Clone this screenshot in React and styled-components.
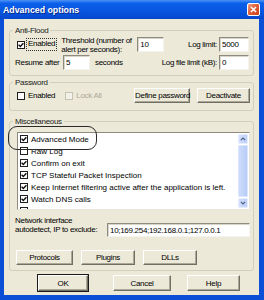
import React from 'react';
import styled, { createGlobalStyle, css } from 'styled-components';

const GlobalStyle = createGlobalStyle`
  html, body {
    margin: 0;
    padding: 0;
    background: #fff;
  }
  body {
    font-family: 'Liberation Sans', Arial, sans-serif;
    font-size: 8px;
    letter-spacing: -0.3px;
    color: #000;
  }
`;

const Window = styled.div`
  width: 264px;
  height: 300px;
  box-sizing: border-box;
  display: flex;
  flex-direction: column;
  background: #0b4fd6;
  padding: 0 5px 5px 4px;
  overflow: hidden;
`;

const TitleBar = styled.div`
  height: 19px;
  margin: 0 -5px 0 -4px;
  padding: 0 4px 0 3px;
  display: flex;
  align-items: center;
  justify-content: space-between;
  background: linear-gradient(#4b93f5 0%, #0a5fea 18%, #0855e0 60%, #0448cc 100%);
  color: #fff;
  font-weight: bold;
  font-size: 8.8px;
  letter-spacing: 0;
  text-shadow: 1px 1px 0 #0a2a8a;
`;

const CloseButton = styled.div`
  width: 13px;
  height: 13px;
  box-sizing: border-box;
  border: 1px solid #fff;
  border-radius: 2px;
  background: linear-gradient(135deg, #eda184 0%, #e0603a 45%, #c8401b 100%);
  display: flex;
  align-items: center;
  justify-content: center;
`;

const Body = styled.div`
  flex: 1;
  position: relative;
  background: #ece9d8;
  display: flex;
  flex-direction: column;
  padding: 0 5px;
`;

const Group = styled.fieldset`
  margin: ${(p) => p.$top}px 0 0;
  padding: 0;
  border: 1px solid #d0d0bf;
  border-radius: 3px;
  min-width: 0;
`;

const Legend = styled.legend`
  margin-left: 3px;
  padding: 0 2px;
  line-height: 9px;
  color: #222;
`;

const Content = styled.div`
  display: flex;
  flex-direction: column;
  padding: ${(p) => p.$pad};
`;

const Row = styled.div`
  display: flex;
  align-items: ${(p) => p.$align || 'center'};
  height: ${(p) => (p.$h ? `${p.$h}px` : 'auto')};
  margin-top: ${(p) => p.$mt || 0}px;
  padding-left: ${(p) => p.$pl || 0}px;
  padding-right: ${(p) => p.$pr || 0}px;
`;

const Box = styled.span`
  width: 8px;
  height: 8px;
  box-sizing: border-box;
  flex-shrink: 0;
  display: inline-flex;
  align-items: center;
  justify-content: center;
  border: 1px solid ${(p) => (p.$disabled ? '#c5c2b2' : '#1f1f1f')};
  background: ${(p) => (p.$disabled ? '#f2f1ea' : '#fff')};
`;

const CheckLabel = styled.label`
  display: inline-flex;
  align-items: center;
  gap: 3px;
  margin-left: ${(p) => p.$ml || 0}px;
  color: ${(p) => (p.$disabled ? '#aca899' : '#000')};
  white-space: nowrap;
`;

const FocusText = styled.span`
  margin-left: 1px;
  padding: 1px 1px 2px;
  border: 1px dotted #333;
  line-height: 8px;
  white-space: nowrap;
`;

const Text = styled.span`
  display: block;
  width: ${(p) => (p.$w ? `${p.$w}px` : 'auto')};
  margin-left: ${(p) => p.$ml || 0}px;
  margin-right: ${(p) => p.$mr || 0}px;
  line-height: 9px;
  white-space: ${(p) => (p.$wrap ? 'normal' : 'nowrap')};
  flex-shrink: 0;
`;

const Spacer = styled.span`
  flex: 1;
`;

const Field = styled.div`
  width: ${(p) => p.$w}px;
  height: ${(p) => p.$h || 15}px;
  box-sizing: border-box;
  flex-shrink: 0;
  margin-left: ${(p) => p.$ml || 0}px;
  margin-top: ${(p) => p.$mt || 0}px;
  padding: 2px 2px 0;
  line-height: 9px;
  background: #fff;
  border: 1px solid #f4f3ee;
  border-top-color: #8d8b80;
  border-left-color: #8d8b80;
  box-shadow: inset 1px 1px 0 #d8d5c8;
  white-space: nowrap;
  overflow: hidden;
`;

const Button = styled.button`
  width: ${(p) => p.$w}px;
  height: ${(p) => p.$h || 15}px;
  margin-left: ${(p) => p.$ml || 0}px;
  padding: 0;
  box-sizing: border-box;
  flex-shrink: 0;
  font: inherit;
  letter-spacing: inherit;
  line-height: 9px;
  white-space: nowrap;
  color: #000;
  background: #ece9d8;
  border: 1px solid;
  border-color: #fff #716f64 #716f64 #fff;
  box-shadow: inset -1px -1px 0 #aca899;
  ${(p) =>
    p.$default &&
    css`
      outline: 1px solid #1a1a1a;
    `}
`;

const ListBox = styled.div`
  width: 233px;
  height: 78px;
  box-sizing: border-box;
  margin-left: 7px;
  display: flex;
  background: #fff;
  border: 1px solid #8d8b80;
  border-right-color: #e8e6dc;
  border-bottom-color: #e8e6dc;
  overflow: hidden;
`;

const Items = styled.div`
  flex: 1;
  overflow: hidden;
  letter-spacing: 0;
`;

const Item = styled.div`
  height: 12px;
  display: flex;
  align-items: center;
  gap: 3px;
  padding-left: 2px;
  white-space: nowrap;
`;

const ScrollBar = styled.div`
  width: 10px;
  display: flex;
  flex-direction: column;
  gap: 1px;
  padding: 1px 1px 1px 0;
`;

const ScrollArrow = styled.div`
  height: 10px;
  border-radius: 1px;
  background: linear-gradient(90deg, #d3e0fd, #bccffa);
  border: 1px solid #e6eefe;
  box-sizing: border-box;
  display: flex;
  align-items: center;
  justify-content: center;
`;

const Thumb = styled.div`
  flex: 1;
  border-radius: 1px;
  background: linear-gradient(90deg, #cddcfc, #b9ccf8);
  border: 1px solid #dbe5fd;
`;

const Highlight = styled.div`
  position: absolute;
  left: 4px;
  top: 107px;
  width: 89px;
  height: 24px;
  box-sizing: border-box;
  border: 1px solid #2a2a2a;
  border-radius: 9px;
  pointer-events: none;
`;

const Footer = styled.div`
  display: flex;
  margin-top: 4px;
  padding-left: 29px;
`;

const Tick = () => (
  <svg width="6" height="6" viewBox="0 0 6 6">
    <path d="M0.6 2.8 L2.3 4.5 L5.4 1.2" fill="none" stroke="#111" strokeWidth="1.4" />
  </svg>
);

const Check = ({ checked, disabled }) => (
  <Box $disabled={disabled}>{checked && <Tick />}</Box>
);

const Chevron = ({ down }) => (
  <svg width="6" height="4" viewBox="0 0 6 4">
    <path
      d={down ? 'M0.8 0.8 L3 3 L5.2 0.8' : 'M0.8 3.2 L3 1 L5.2 3.2'}
      fill="none"
      stroke="#4d6185"
      strokeWidth="1.2"
    />
  </svg>
);

const options = [
  { label: 'Advanced Mode', checked: true },
  { label: 'Raw Log', checked: false },
  { label: 'Confirm on exit', checked: true },
  { label: 'TCP Stateful Packet Inspection', checked: true },
  { label: 'Keep Internet filtering active after the application is left.', checked: true },
  { label: 'Watch DNS calls', checked: true },
  { label: '', checked: true },
];

const App = () => (
  <>
    <GlobalStyle />
    <Window>
      <TitleBar>
        <span>Advanced options</span>
        <CloseButton>
          <svg width="7" height="7" viewBox="0 0 7 7">
            <path d="M1 1 L6 6 M6 1 L1 6" stroke="#fff" strokeWidth="1.5" />
          </svg>
        </CloseButton>
      </TitleBar>
      <Body>
        <Group $top={7}>
          <Legend>Anti-Flood</Legend>
          <Content $pad="2px 0 5px">
            <Row $h={15} $pl={7} $pr={4}>
              <Check checked />
              <FocusText>Enabled</FocusText>
              <Text $w={76} $ml={4} $wrap>
                Threshold (number of alert per seconds):
              </Text>
              <Field $w={27}>10</Field>
              <Spacer />
              <Text $mr={2}>Log limit:</Text>
              <Field $w={30}>5000</Field>
            </Row>
            <Row $h={15} $mt={3} $pl={5} $pr={4}>
              <Text $w={48}>Resume after</Text>
              <Field $w={27}>5</Field>
              <Text $ml={5}>seconds</Text>
              <Spacer />
              <Text $mr={2}>Log file limit (kB):</Text>
              <Field $w={30}>0</Field>
            </Row>
          </Content>
        </Group>

        <Group $top={2}>
          <Legend>Password</Legend>
          <Content $pad="1px 0 7px">
            <Row $h={15} $pl={7} $pr={3}>
              <CheckLabel>
                <Check />
                Enabled
              </CheckLabel>
              <CheckLabel $ml={10} $disabled>
                <Check disabled />
                Lock All
              </CheckLabel>
              <Spacer />
              <Button $w={56}>Define password</Button>
              <Button $w={53} $ml={7}>
                Deactivate
              </Button>
            </Row>
          </Content>
        </Group>

        <Group $top={6}>
          <Legend>Miscellaneous</Legend>
          <Content $pad="6px 0 5px">
            <ListBox>
              <Items>
                {options.map((o, i) => (
                  <Item key={i}>
                    <Check checked={o.checked} />
                    {o.label}
                  </Item>
                ))}
              </Items>
              <ScrollBar>
                <ScrollArrow>
                  <Chevron />
                </ScrollArrow>
                <Thumb />
                <ScrollArrow>
                  <Chevron down />
                </ScrollArrow>
              </ScrollBar>
            </ListBox>
            <Row $align="flex-start" $mt={6} $pl={5}>
              <Text $w={92} $wrap>
                Network interface autodetect, IP to exclude:
              </Text>
              <Field $w={143} $h={14} $mt={7}>
                10;169.254;192.168.0.1;127.0.0.1
              </Field>
            </Row>
            <Row $mt={13} $pl={6}>
              <Button $w={57}>Protocols</Button>
              <Button $w={54} $ml={8}>
                Plugins
              </Button>
              <Button $w={54} $ml={8}>
                DLLs
              </Button>
            </Row>
          </Content>
        </Group>

        <Footer>
          <Button $w={50} $h={16} $default>
            OK
          </Button>
          <Button $w={58} $h={16} $ml={25}>
            Cancel
          </Button>
          <Button $w={53} $h={16} $ml={16}>
            Help
          </Button>
        </Footer>

        <Highlight />
      </Body>
    </Window>
  </>
);

export default App;
